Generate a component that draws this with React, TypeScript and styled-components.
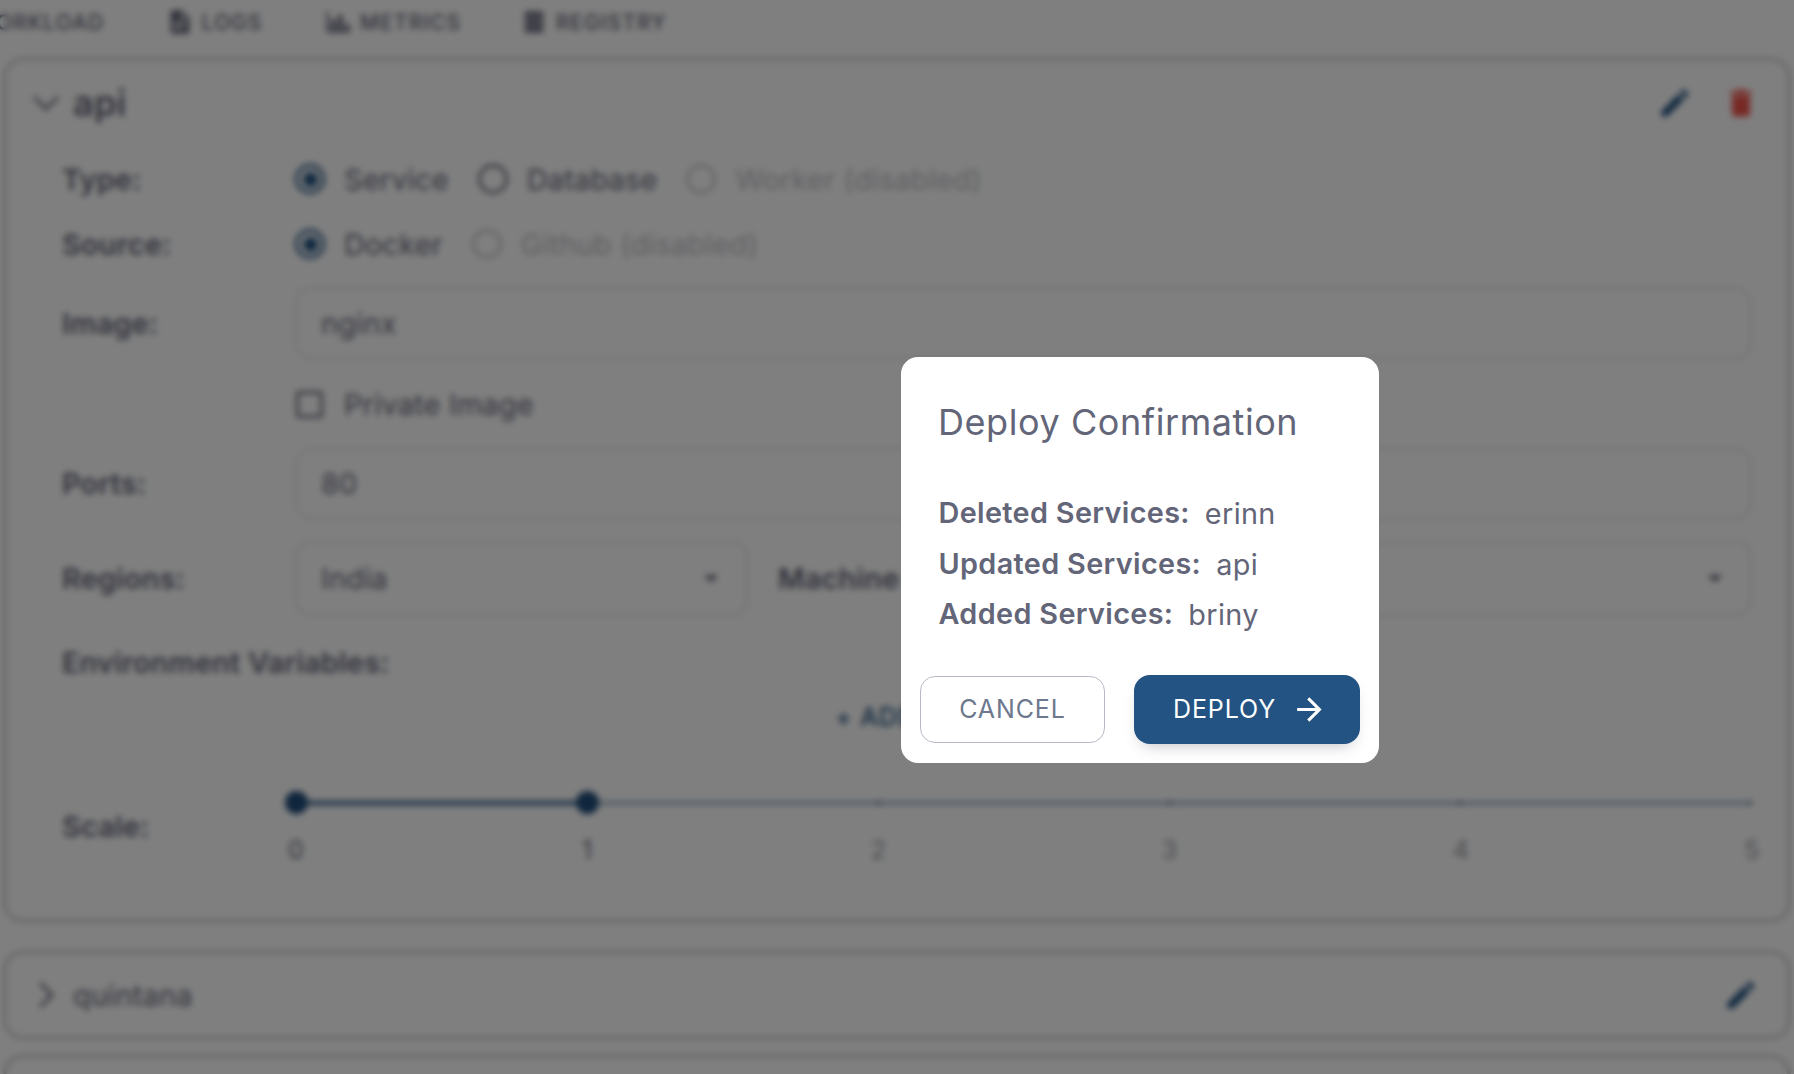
import React from "react";
import styled, { createGlobalStyle } from "styled-components";

const Global = createGlobalStyle`
  * { box-sizing: border-box; }
  body {
    margin: 0;
    background: #fff;
    font-family: Inter, "Liberation Sans", sans-serif;
    color: #636578;
  }
`;

const Page = styled.div`
  width: 1794px;
  height: 1074px;
  overflow: hidden;
  isolation: isolate;
  display: flex;
  flex-direction: column;
  background: #fff;
`;

const Tabs = styled.nav`
  flex: none;
  display: flex;
  align-items: center;
  gap: 61.5px;
  height: 44px;
  margin-left: -62px;
`;

const Tab = styled.div`
  display: flex;
  align-items: center;
  gap: 8px;
  white-space: nowrap;
  font-size: 21px;
  font-weight: 500;
  letter-spacing: 1.05px;
  svg { flex: none; }
  &:last-child { margin-left: -3px; }
`;

const Stack = styled.main`
  flex: none;
  display: flex;
  flex-direction: column;
  padding: 13px 3px 0;
`;

const Card = styled.section<{ $height: number; $gap: number }>`
  flex: none;
  height: ${(p) => p.$height}px;
  margin-bottom: ${(p) => p.$gap}px;
  border: 4px solid #d8d8dc;
  border-radius: 20px;
  padding: 0 28px 0 25px;
`;

const CardHead = styled.header<{ $height: number }>`
  display: flex;
  align-items: center;
  height: ${(p) => p.$height}px;
`;

const CardTitle = styled.h2<{ $bold?: boolean }>`
  flex: 1;
  margin: 0 0 0 13px;
  font-size: ${(p) => (p.$bold ? 36 : 28.8)}px;
  font-weight: ${(p) => (p.$bold ? 600 : 400)};
  letter-spacing: 0.25px;
`;

const Actions = styled.div`
  display: flex;
  gap: 30px;
`;

const Body = styled.div`
  display: flex;
  flex-direction: column;
  padding: 0 7px 0 30px;
`;

const Row = styled.div<{ $height: number }>`
  display: flex;
  align-items: center;
  height: ${(p) => p.$height}px;
`;

const Label = styled.div<{ $width?: number; $indent?: number }>`
  flex: none;
  width: ${(p) => (p.$width ? `${p.$width}px` : "auto")};
  padding-left: ${(p) => p.$indent ?? 0}px;
  font-size: 28.8px;
  font-weight: 600;
  letter-spacing: 0.25px;
  white-space: nowrap;
`;

const Choice = styled.div<{ $disabled?: boolean }>`
  display: flex;
  align-items: center;
  gap: 19px;
  margin-right: 29px;
  font-size: 28.8px;
  letter-spacing: 0.25px;
  white-space: nowrap;
  color: ${(p) => (p.$disabled ? "#bdbec5" : "#636578")};
`;

const Radio = styled.span<{ $on?: boolean; $disabled?: boolean }>`
  flex: none;
  display: flex;
  align-items: center;
  justify-content: center;
  width: 30px;
  height: 30px;
  border-radius: 50%;
  border: 3px solid ${(p) => (p.$on ? "#235382" : p.$disabled ? "#c8c8ce" : "#6d6e80")};
  &::after {
    content: "";
    width: 15px;
    height: 15px;
    border-radius: 50%;
    background: ${(p) => (p.$on ? "#235382" : "transparent")};
  }
`;

const Check = styled.span`
  flex: none;
  width: 27px;
  height: 27px;
  margin: 0 2px 0 1px;
  border-radius: 3px;
  border: 3px solid #6d6e80;
`;

const Field = styled.div<{ $height: number; $width?: number }>`
  flex: ${(p) => (p.$width ? "none" : "1")};
  width: ${(p) => (p.$width ? `${p.$width}px` : "auto")};
  height: ${(p) => p.$height}px;
  display: flex;
  align-items: center;
  justify-content: space-between;
  padding: 0 18px 0 24px;
  border: 2px solid #dfdfe3;
  border-radius: 16px;
  font-size: 28.8px;
  letter-spacing: 0.25px;
  svg { margin-left: auto; }
`;

const AddRow = styled.div`
  height: 48px;
  padding: 4px 0 0 773px;
  font-size: 25px;
  line-height: 32px;
  font-weight: 500;
  letter-spacing: 0.9px;
  color: #235382;
`;

const Slider = styled.div`
  flex: 1;
  display: flex;
  flex-direction: column;
  margin-top: 6px;
`;

const Rail = styled.div`
  display: grid;
  grid-template-columns: 1fr 4fr;
  align-items: center;
  height: 24px;
`;

const Track = styled.div<{ $on?: boolean }>`
  display: flex;
  align-items: center;
  justify-content: space-between;
  height: 4px;
  background: ${(p) => (p.$on ? "#235382" : "#aabdcf")};
`;

const Thumb = styled.span`
  flex: none;
  width: 23px;
  height: 23px;
  margin: 0 -11.5px;
  border-radius: 50%;
  background: #1f4c7a;
  z-index: 1;
`;

const Tick = styled.span<{ $hidden?: boolean }>`
  width: 4px;
  height: 4px;
  border-radius: 50%;
  background: ${(p) => (p.$hidden ? "transparent" : "#4f5c80")};
`;

const Marks = styled.div`
  display: flex;
  justify-content: space-between;
  margin: 17px -20px 0;
`;

const Mark = styled.span<{ $on: boolean }>`
  width: 40px;
  text-align: center;
  font-size: 25px;
  line-height: 36px;
  color: ${(p) => (p.$on ? "#636578" : "#96979f")};
`;

const Backdrop = styled.div`
  position: fixed;
  inset: 0;
  background: rgba(0, 0, 0, 0.5);
  backdrop-filter: blur(3px);
`;

const Dialog = styled.div`
  position: absolute;
  left: 901px;
  top: 357px;
  width: 478px;
  height: 406px;
  border-radius: 17px;
  background: #fff;
  padding: 0 19px 19px;
  display: flex;
  flex-direction: column;
`;

const DialogTitle = styled.h1`
  margin: 41px 0 46px 18px;
  font-size: 36px;
  line-height: 48px;
  font-weight: 400;
  letter-spacing: 0.57px;
  white-space: nowrap;
`;

const Summary = styled.dl`
  margin: 0 0 0 18.5px;
  display: flex;
  flex-direction: column;
`;

const SummaryLine = styled.div`
  display: flex;
  gap: 15px;
  height: 50.5px;
  font-size: 28.8px;
  line-height: 41px;
  letter-spacing: 0.35px;
  white-space: nowrap;
  dt { font-weight: 600; }
  dd { margin: 1px 0 0; }
`;

const Buttons = styled.div`
  display: flex;
  align-items: center;
  justify-content: space-between;
  margin-top: auto;
`;

const Button = styled.button<{ $primary?: boolean }>`
  display: flex;
  align-items: center;
  justify-content: center;
  gap: 15px;
  width: ${(p) => (p.$primary ? 226 : 185)}px;
  height: ${(p) => (p.$primary ? 69 : 67)}px;
  padding: 0 0 1px;
  border: ${(p) => (p.$primary ? "0" : "1px solid #b6bbc6")};
  border-radius: ${(p) => (p.$primary ? 16 : 15)}px;
  background: ${(p) => (p.$primary ? "#235382" : "#fff")};
  color: ${(p) => (p.$primary ? "#fff" : "#6d788d")};
  box-shadow: ${(p) => (p.$primary ? "0 8px 16px -8px rgba(76,78,100,.42)" : "none")};
  font-family: inherit;
  font-size: 25px;
  font-weight: 400;
  letter-spacing: 0.88px;
  svg { margin-right: -7px; }
`;

const Icon = ({ d, size = 28, color = "currentColor" }: { d: string; size?: number; color?: string }) => (
  <svg width={size} height={size} viewBox="0 0 24 24" fill={color}>
    <path d={d} />
  </svg>
);

const Chevron = ({ open }: { open?: boolean }) => (
  <svg width="28" height="28" viewBox="0 0 28 28" fill="none" stroke="#6b6d7f" strokeWidth="3">
    <path d={open ? "M2 8L14 20L26 8" : "M8 2L20 14L8 26"} />
  </svg>
);

const FILE = "M13,9H18.5L13,3.5V9M6,2H14L20,8V20A2,2 0 0,1 18,22H6C4.89,22 4,21.1 4,20V4C4,2.89 4.89,2 6,2M15,18V16H6V18H15M18,14V12H6V14H18Z";
const CHART = "M22,21H2V3H4V19H6V10H10V19H12V6H16V19H18V14H22V21Z";
const CABINET = "M4 3H20V8.2H4ZM4 9.4H20V14.6H4ZM4 15.8H20V21H4Z";
const CUBE = "M21,16.5C21,17 20.7,17.4 20.3,17.6L12,22L3.7,17.6C3.3,17.4 3,17 3,16.5V7.5L12,2L21,7.5Z";
const PENCIL = "M20.71,7.04C21.1,6.65 21.1,6 20.71,5.63L18.37,3.29C18,2.9 17.35,2.9 16.96,3.29L15.12,5.12L18.87,8.87M3,17.25V21H6.75L17.81,9.93L14.06,6.18L3,17.25Z";
const TRASH = "M19,4H15.5L14.5,3H9.5L8.5,4H5V6H19M6,19A2,2 0 0,0 8,21H16A2,2 0 0,0 18,19V7H6V19Z";
const CARET = "M7,10L12,15L17,10H7Z";
const ARROW = "M4,11V13H16L10.5,18.5L11.92,19.92L19.84,12L11.92,4.08L10.5,5.5L16,11H4Z";

export default function App() {
  return (
    <>
      <Global />
      <Page>
        <Tabs>
          <Tab><Icon d={CUBE} />WORKLOAD</Tab>
          <Tab><Icon d={FILE} />LOGS</Tab>
          <Tab><Icon d={CHART} />METRICS</Tab>
          <Tab><Icon d={CABINET} />REGISTRY</Tab>
        </Tabs>
        <Stack>
          <Card $height={866} $gap={27}>
            <CardHead $height={84}>
              <Chevron open />
              <CardTitle $bold>api</CardTitle>
              <Actions>
                <Icon d={PENCIL} size={36} color="#235382" />
                <Icon d={TRASH} size={36} color="#f0524a" />
              </Actions>
            </CardHead>
            <Body>
              <Row $height={68}>
                <Label $width={233}>Type:</Label>
                <Choice><Radio $on />Service</Choice>
                <Choice><Radio />Database</Choice>
                <Choice $disabled><Radio $disabled />Worker (disabled)</Choice>
              </Row>
              <Row $height={62}>
                <Label $width={233}>Source:</Label>
                <Choice><Radio $on />Docker</Choice>
                <Choice $disabled><Radio $disabled />Github (disabled)</Choice>
              </Row>
              <Row $height={96}>
                <Label $width={233}>Image:</Label>
                <Field $height={72}>nginx</Field>
              </Row>
              <Row $height={67}>
                <Label $width={233} />
                <Choice><Check />Private Image</Choice>
              </Row>
              <Row $height={91}>
                <Label $width={233}>Ports:</Label>
                <Field $height={71}>80</Field>
              </Row>
              <Row $height={98}>
                <Label $width={233}>Regions:</Label>
                <Field $height={75} $width={453}>India<Icon d={CARET} size={34} /></Field>
                <Label $width={281} $indent={30}>Machine</Label>
                <Field $height={75}><Icon d={CARET} size={34} /></Field>
              </Row>
              <Row $height={70}>
                <Label>Environment Variables:</Label>
              </Row>
              <AddRow>+ ADD</AddRow>
              <Row $height={162}>
                <Label $width={234}>Scale:</Label>
                <Slider>
                  <Rail>
                    <Track $on><Thumb /><Thumb /></Track>
                    <Track>
                      <Tick $hidden /><Tick /><Tick /><Tick /><Tick />
                    </Track>
                  </Rail>
                  <Marks>
                    {[0, 1, 2, 3, 4, 5].map((n) => <Mark key={n} $on={n < 2}>{n}</Mark>)}
                  </Marks>
                </Slider>
              </Row>
            </Body>
          </Card>
          <Card $height={90} $gap={14}>
            <CardHead $height={82}>
              <Chevron />
              <CardTitle>quintana</CardTitle>
              <Actions><Icon d={PENCIL} size={36} color="#235382" /></Actions>
            </CardHead>
          </Card>
          <Card $height={90} $gap={0} />
        </Stack>
      </Page>
      <Backdrop>
        <Dialog>
          <DialogTitle>Deploy Confirmation</DialogTitle>
          <Summary>
            <SummaryLine><dt>Deleted Services:</dt><dd>erinn</dd></SummaryLine>
            <SummaryLine><dt>Updated Services:</dt><dd>api</dd></SummaryLine>
            <SummaryLine><dt>Added Services:</dt><dd>briny</dd></SummaryLine>
          </Summary>
          <Buttons>
            <Button>CANCEL</Button>
            <Button $primary>DEPLOY<Icon d={ARROW} size={37} /></Button>
          </Buttons>
        </Dialog>
      </Backdrop>
    </>
  );
}
